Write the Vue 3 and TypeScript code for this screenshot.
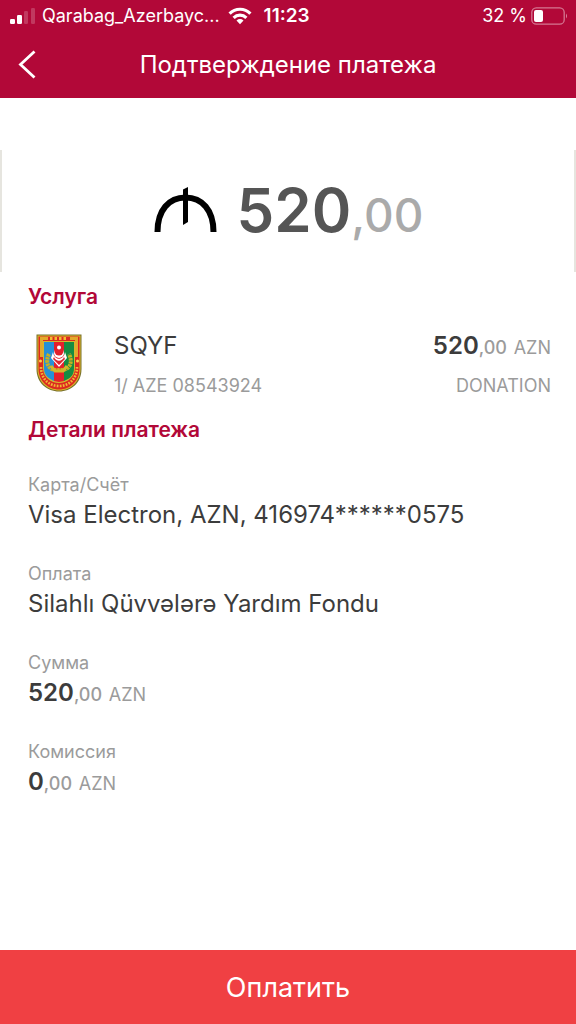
<script setup lang="ts">
interface Detail {
  label: string
  text?: string
  whole?: string
}

const carrier = 'Qarabag_Azerbayc...'
const details: Detail[] = [
  { label: 'Карта/Счёт', text: 'Visa Electron, AZN, 416974******0575' },
  { label: 'Оплата', text: 'Silahlı Qüvvələrə Yardım Fondu' },
  { label: 'Сумма', whole: '520' },
  { label: 'Комиссия', whole: '0' },
]
</script>

<template>
  <div class="screen">
    <header class="top">
      <div class="status">
        <svg class="signal" width="26" height="18" viewBox="0 0 26 18" aria-hidden="true">
          <rect x="0" y="12" width="5" height="5" rx="1.2" fill="#fff" />
          <rect x="7" y="8" width="5" height="9" rx="1.2" fill="#fff" />
          <rect x="14" y="4" width="4" height="13" rx="1.2" fill="#fff" opacity=".2" />
          <rect x="21" y="1" width="4" height="16" rx="1.2" fill="#fff" opacity=".2" />
        </svg>
        <span class="carrier">{{ carrier }}</span>
        <svg class="wifi" width="24" height="18" viewBox="0 0 24 18" aria-hidden="true">
          <g fill="none" stroke="#fff" stroke-width="3.2">
            <path d="M1.6 6.6C7.4 .8 16.6 .8 22.4 6.6" />
            <path d="M5.6 10.8C9.2 7.3 14.8 7.3 18.4 10.8" />
          </g>
          <path d="M8.5 13.5Q12 10.6 15.5 13.5L12 17.3Z" fill="#fff" />
        </svg>
        <time class="time">11:23</time>
        <span class="percent">32 %</span>
        <svg class="battery" width="37" height="18" viewBox="0 0 37 18" aria-hidden="true">
          <rect x=".8" y=".8" width="32.4" height="16.4" rx="4.5" fill="none" stroke="#fff" stroke-width="1.3" opacity=".45" />
          <rect x="3" y="3" width="9" height="12" rx="2" fill="#fff" />
          <path d="M35 6.5Q37 9 35 11.5Z" fill="#fff" opacity=".5" />
        </svg>
      </div>
      <nav class="bar">
        <button class="back" type="button" aria-label="Назад">
          <svg width="18" height="30" viewBox="0 0 18 30" aria-hidden="true">
            <path d="M16.500 1.500L2.500 14.500L16.500 27.500" fill="none" stroke="#fff" stroke-width="2.800" />
          </svg>
        </button>
        <h1 class="title">Подтверждение платежа</h1>
      </nav>
    </header>

    <main class="content">
      <div class="total">
        <svg class="manat" width="64" height="46" viewBox="0 0 64 46" role="img" aria-label="AZN">
          <path d="M4.500 46C4.500 24 16 11.500 32.500 11.500S60.500 24 60.500 46" fill="none" stroke="#000" stroke-width="6" />
          <path d="M30 3.500L35 1V36L30 39Z" fill="#000" />
        </svg>
        <p class="sum"><span class="sum-whole">520</span><span class="sum-cents">,00</span></p>
      </div>

      <section class="service">
        <h2 class="heading">Услуга</h2>
        <div class="row">
          <svg class="emblem" width="46" height="58" viewBox="0 0 46 58" aria-hidden="true">
            <path d="M.5 .5H45.500V35C45.500 49 35 57.500 23 57.500S.5 49 .5 35Z" fill="#77702a" />
            <path d="M1.500 1.500H44.500V35C44.500 48 34 56.500 23 56.500S1.500 48 1.500 35Z" fill="#dfb62b" />
            <path d="M2.500 2.500H43.500V35C43.500 47 34 55.500 23 55.500S2.500 47 2.500 35Z" fill="#dc2a20" />
            <path d="M4 3H12V6H7V23H4ZM34 3H42V23H39V6H34Z" fill="#e2a92c" />
            <path d="M7 7H39V34C39 43 31 49 23 49S7 43 7 34Z" fill="#d5b72e" />
            <path d="M8 8H18V47C11 44 8 40 8 34Z" fill="#2690d6" />
            <path d="M18 8H28V47L23 48L18 47Z" fill="#e5202b" />
            <path d="M28 8H38V34C38 41 35 44 28 47Z" fill="#168c43" />
            <path d="M13 20C9 28 12 35 19 36H27C34 35 37 28 33 20" fill="none" stroke="#c6b124" stroke-width="4" stroke-dasharray="2.500 .7" />
            <path d="M15 32L19 37H27L31 32" fill="none" stroke="#d5b72b" stroke-width="3" />
            <path d="M18 10H28V24L23 31L18 24Z" fill="#e3202e" />
            <path d="M17 18C18 27 28 27 29 18L31 24L23 33L15 24Z" fill="#fff" />
            <path d="M18 23C20 28 26 28 28 23L29 25L23 31L17 25Z" fill="#dc2630" />
            <circle cx="23" cy="19" r="5" fill="#fff" />
            <circle cx="23" cy="17" r="4.500" fill="#e2202c" />
            <circle cx="23" cy="13.500" r="2" fill="#fff" />
            <path d="M5 33C5 45 13 52 23 52S41 45 41 33" fill="none" stroke="#efba35" stroke-width="2.600" stroke-dasharray="1.700 1.300" />
            <path d="M14 4.500H32" stroke="#f2bd31" stroke-width="3" stroke-dasharray="2.500 2" />
            <circle cx="4.500" cy="27" r="1.500" fill="#f8d44e" />
            <circle cx="41.500" cy="27" r="1.500" fill="#f8d44e" />
          </svg>
          <div class="info">
            <p class="name">SQYF</p>
            <p class="note">1/ AZE 08543924</p>
          </div>
          <div class="charge">
            <p class="money"><b>520</b><span class="cents">,00</span> <span class="currency">AZN</span></p>
            <p class="note">DONATION</p>
          </div>
        </div>
      </section>

      <section>
        <h2 class="heading">Детали платежа</h2>
        <dl class="details">
          <div v-for="item in details" :key="item.label">
            <dt class="label">{{ item.label }}</dt>
            <dd v-if="item.text" class="value">{{ item.text }}</dd>
            <dd v-else class="money"><b>{{ item.whole }}</b><span class="cents">,00</span> <span class="currency">AZN</span></dd>
          </div>
        </dl>
      </section>
    </main>

    <button class="pay" type="button">Оплатить</button>
  </div>
</template>

<style>
body {
  background: #fff;
}
</style>

<style scoped>
.screen {
  display: flex;
  flex-direction: column;
  min-height: 100vh;
  font-family: Inter, "Liberation Sans", sans-serif;
  color: #3c3c3c;
}
h1, h2, p, dl, dd {
  margin: 0;
}
svg {
  display: block;
  flex: none;
}
.top {
  background: #b20838;
  color: #fff;
}
.status {
  display: flex;
  align-items: center;
  height: 32px;
  padding: 0 8px 0 10px;
  font-size: 18px;
  line-height: 32px;
}
.carrier {
  margin-left: 6px;
}
.wifi {
  margin-left: 8px;
}
.time {
  margin-left: 12px;
  font-size: 19px;
  font-weight: 600;
}
.percent {
  margin-left: auto;
}
.battery {
  margin-left: 4px;
}
.bar {
  display: grid;
  grid-template-columns: 56px 1fr 56px;
  align-items: center;
  height: 66px;
}
.back {
  display: flex;
  align-items: center;
  height: 64px;
  padding: 0 0 0 18px;
  border: 0;
  background: none;
  cursor: pointer;
}
.title {
  font-size: 24px;
  line-height: 32px;
  font-weight: 400;
  text-align: center;
  white-space: nowrap;
}
.content {
  flex: 1;
  padding-top: 52px;
}
.total {
  box-sizing: border-box;
  display: flex;
  align-items: baseline;
  justify-content: center;
  gap: 20px;
  height: 122px;
  padding-top: 24px;
  border: solid #e6e5df;
  border-width: 0 2px;
}
.sum {
  line-height: 72px;
  white-space: nowrap;
}
.sum-whole {
  font-size: 60px;
  font-weight: 600;
  color: #555;
}
.sum-cents {
  font-size: 46px;
  font-weight: 500;
  color: #aaa;
}
.heading {
  padding: 0 28px;
  font-size: 21px;
  line-height: 28px;
  font-weight: 600;
  color: #b20838;
}
.service {
  padding-top: 11px;
}
.row {
  display: flex;
  gap: 32px;
  padding: 19px 25px 16px 36px;
}
.emblem {
  margin-top: 4px;
}
.info {
  flex: 1;
}
.name,
.value,
.money {
  font-size: 24px;
  line-height: 32px;
}
.note {
  margin-top: 10px;
  font-size: 18px;
  line-height: 28px;
  color: #9b9b9b;
}
.charge {
  text-align: right;
}
.money b {
  font-weight: 600;
}
.cents,
.currency {
  font-size: 18px;
  line-height: 24px;
  color: #9b9b9b;
}
.cents {
  font-weight: 500;
}
.details {
  display: flex;
  flex-direction: column;
  gap: 31px;
  padding: 29px 28px;
}
.label {
  margin-bottom: 2px;
  font-size: 18px;
  line-height: 24px;
  color: #9b9b9b;
}
.pay {
  height: 74px;
  border: 0;
  background: #f04043;
  color: #fff;
  font-family: inherit;
  font-size: 27px;
  cursor: pointer;
}
</style>
